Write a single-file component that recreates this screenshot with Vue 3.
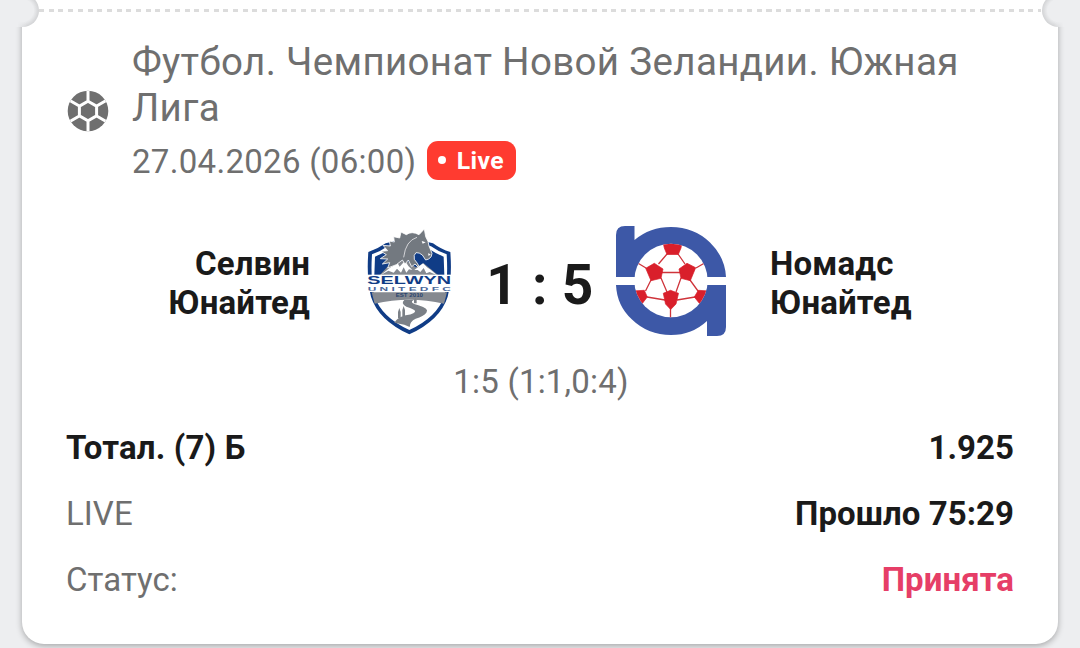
<template>
  <div class="page">
    <div class="ticket">
      <div class="tear">
        <span class="notch notch-left"></span>
        <span class="notch notch-right"></span>
      </div>

      <div class="event">
        <svg class="sport-icon" viewBox="0 0 42 42">
          <defs>
            <clipPath id="ball"><circle cx="21" cy="21" r="20.3" /></clipPath>
          </defs>
          <g clip-path="url(#ball)">
            <rect width="42" height="42" fill="#6f6f6f" />
            <path
              d="M21 11.200 29.600 16.200V25.800L21 30.800 12.400 25.800V16.200ZM21 11V0M29.700 16 40 10M29.700 26 40 32M21 31V42M12.300 26 2 32M12.300 16 2 10"
              fill="none" stroke="#fff" stroke-width="3"
            />
          </g>
        </svg>
        <div class="event-info">
          <div class="league">{{ bet.league }}</div>
          <div class="date-row">
            <span class="date">{{ bet.date }}</span>
            <span class="live"><i class="live-dot"></i>Live</span>
          </div>
        </div>
      </div>

      <div class="match">
        <div class="team home">{{ bet.home }}</div>
        <svg class="logo-home" viewBox="0 0 330 375">
          <!-- shield -->
          <path d="M40 96Q66 88 92 70Q130 62 163 42Q196 62 234 70Q258 88 286 96Q292 175 278 230Q256 300 163 343Q70 300 48 230Q34 175 40 96Z" fill="#103c86" />
          <path d="M51 103Q76 95 98 79Q134 70 163 54Q192 70 228 79Q250 95 275 103Q280 180 268 228Q246 292 163 330Q80 292 58 228Q46 180 51 103Z" fill="#fff" />
          <path d="M60 110Q84 100 104 87Q136 78 163 64Q190 78 222 87Q242 100 266 110L268 166H58Z" fill="#103c86" />
          <!-- mountains -->
          <path d="M74 166 96 142 150 118 182 142 206 130 250 166Z" fill="#858990" />
          <path d="M76 166 104 144 128 130 134 140 150 122 160 138 172 150 162 148 154 158 146 142 138 158 126 146 116 158 100 152ZM178 150 204 130 216 142 228 150 246 166 224 156 214 160 206 144 196 156 188 150Z" fill="#fff" />
          <!-- horse -->
          <path
            d="M208 27 212 50Q221 64 222 78L231 100Q231 112 221 117L212 120 202 105Q193 97 183 98Q175 104 178 118Q190 130 194 146L180 132 170 140 160 120 150 132 142 120 124 134 98 144 104 128 82 132 98 117 76 116 94 104 78 94 98 92 84 76 106 78 103 63 118 66 116 50 134 54 138 36 154 44Q170 32 192 44Z"
            fill="#737980" stroke="#fff" stroke-width="2.500"
          />
          <path d="M186 52Q152 62 146 112" fill="none" stroke="#e4e5e7" stroke-width="2.500" />
          <path d="M200 63 212 67 203 71ZM219 100 227 103 221 108Z" fill="#fff" />
          <!-- name band -->
          <rect x="34" y="164" width="258" height="52" fill="#fff" />
          <text x="37" y="192" textLength="251" lengthAdjust="spacingAndGlyphs" class="crest-name">SELWYN</text>
          <text x="38" y="212" textLength="250" lengthAdjust="spacingAndGlyphs" class="crest-sub">U N I T E D  F C</text>
          <path d="M50 217H276L267 251Q163 228 59 251Z" fill="#858990" />
          <text x="122" y="232" textLength="82" lengthAdjust="spacingAndGlyphs" class="crest-year">EST 2010</text>
          <path
            d="M148 240H176Q160 248 190 256Q224 266 214 278Q206 288 182 296Q164 304 164 321L148 314 118 308Q128 292 152 286Q184 280 180 272Q174 266 154 260Q136 250 148 240Z"
            fill="#7b8087"
          />
          <path d="M142 290V270L146 258 150 270V290ZM129 294V276L133 264 137 276V294ZM177 250V240L181 234 185 240V250Z" fill="#7b8087" />
        </svg>
        <div class="score">{{ bet.score }}</div>
        <svg class="logo-away" viewBox="0 0 110 110">
          <defs>
            <clipPath id="away-ball"><circle cx="55" cy="54.500" r="36.700" /></clipPath>
          </defs>
          <path d="M0 51V9Q0 0 9 0H18.500V14Q34 1 55 1Q78 1 94 16.500Q109 31 110 51Z" fill="#3d58a7" />
          <path d="M0 59H110V101Q110 110 101 110H91V95Q76 109 55 109Q32 109 16 93.500Q1 80 0 59Z" fill="#3d58a7" />
          <g clip-path="url(#away-ball)">
            <rect width="110" height="110" fill="#fff" />
            <path
              d="M51 28 42.500 38M62 28 69 38M46 46.500H64M30 42 20 36M80 42 92 35M35 54 29.500 65M45 52 51 66M65 52 60 66M74 54 82 65M31 71 49 74M61 74 79 71M54.500 80V93"
              fill="none" stroke="#cf343b" stroke-width="1.300"
            />
            <path
              d="M47 16H66L65 22 62.300 28.500H51L48.300 22ZM38.300 37.300 47 43 45 52.300 35 54.700 29.700 42.300ZM71 37.300 63 43 65 52.300 74.300 54.700 79.700 41.700ZM47.300 67.300 54.500 64.300 62.500 67.300 60 78 54.700 83.500 49.500 78ZM16 65 28.300 64.300 31.300 71 26.300 77.500 18 80ZM94 65 82.300 64.300 78.300 71 83.500 77.500 92 80Z"
              fill="#d91f2b" stroke="#d91f2b" stroke-width="0.700"
            />
          </g>
        </svg>
        <div class="team away">{{ bet.away }}</div>
      </div>

      <div class="periods">{{ bet.periods }}</div>

      <div class="rows">
        <div v-for="row in rows" :key="row.label" class="row">
          <span :class="{ strong: row.strong }">{{ row.label }}</span>
          <span class="value" :class="{ accepted: row.accepted }">{{ row.value }}</span>
        </div>
      </div>
    </div>
  </div>
</template>

<script setup>
const bet = {
  league: 'Футбол. Чемпионат Новой Зеландии. Южная Лига',
  date: '27.04.2026 (06:00)',
  home: 'Селвин Юнайтед',
  away: 'Номадс Юнайтед',
  score: '1 : 5',
  periods: '1:5 (1:1,0:4)',
};

const rows = [
  { label: 'Тотал. (7) Б', value: '1.925', strong: true },
  { label: 'LIVE', value: 'Прошло 75:29' },
  { label: 'Статус:', value: 'Принята', accepted: true },
];
</script>

<style>
body {
  margin: 0;
  background: #edeef0;
}
</style>

<style scoped>
.page {
  height: 648px;
  overflow: hidden;
  padding: 0 22px;
  box-sizing: border-box;
  background: #edeef0;
  font-family: Roboto, "Liberation Sans", sans-serif;
  font-size: 33px;
  color: #6f6f6f;
}

.ticket {
  position: relative;
  height: 643.5px;
  box-sizing: border-box;
  padding: 9px 44px 0;
  background: #fff;
  border-radius: 0 0 22px 22px;
  box-shadow: 0 2px 6px rgba(0, 0, 0, 0.3);
}

.tear {
  height: 3px;
  margin: 0 -27px;
  background: repeating-linear-gradient(90deg, #dcdcdc 0 5px, transparent 5px 9.7px);
}

.notch {
  position: absolute;
  top: -6px;
  width: 33px;
  height: 33px;
}

.notch-left {
  left: -16.5px;
  border-radius: 0 16.5px 16.5px 0;
  background:
    linear-gradient(90deg, #edeef0 35%, transparent 65%),
    radial-gradient(circle at center, #edeef0 11px, #d2d3d5 16.5px);
}

.notch-right {
  right: -16.5px;
  border-radius: 16.5px 0 0 16.5px;
  background:
    linear-gradient(270deg, #edeef0 35%, transparent 65%),
    radial-gradient(circle at center, #edeef0 11px, #d2d3d5 16.5px);
}

.event {
  display: flex;
  align-items: center;
  gap: 23px;
  padding-top: 27px;
}

.sport-icon {
  width: 42px;
  height: 42px;
  margin: 2px 0 0 1px;
  flex-shrink: 0;
}

.league {
  font-size: 38.5px;
  line-height: 46px;
  letter-spacing: 0.34px;
}

.date-row {
  display: flex;
  align-items: center;
  gap: 11px;
  margin-top: 10px;
  height: 39px;
}

.date {
  padding-top: 2px;
  letter-spacing: 0.3px;
  white-space: nowrap;
}

.live {
  display: flex;
  align-items: center;
  width: 89px;
  height: 39px;
  box-sizing: border-box;
  padding-left: 11px;
  border-radius: 11px;
  background: #ff3b30;
  color: #fff;
  font-size: 24.75px;
  font-weight: 700;
  letter-spacing: 0.4px;
}

.live-dot {
  flex-shrink: 0;
  width: 8px;
  height: 8px;
  margin: 0 10.5px 1px 0;
  border-radius: 50%;
  background: #fff;
}

.match {
  display: grid;
  grid-template-columns: 244px 45px 110px 25px 126px 110px 44px 1fr;
  align-items: center;
  height: 125px;
  margin-top: 40px;
}

.team {
  color: #1a1a1a;
  font-weight: 700;
  line-height: 39px;
  letter-spacing: 0.15px;
}

.home {
  grid-column: 1;
  text-align: right;
  padding-left: 80px;
}

.away {
  grid-column: 8;
  width: 170px;
}

.logo-home {
  grid-column: 3;
  width: 110px;
  height: 125px;
}

.logo-away {
  grid-column: 6;
  width: 110px;
  height: 110px;
  margin-bottom: 3px;
}

.score {
  grid-column: 4 / 6;
  padding: 4px 1px 0 0;
  color: #1a1a1a;
  font-size: 55px;
  font-weight: 700;
  letter-spacing: 0.3px;
  text-align: center;
  white-space: nowrap;
}

.crest-name {
  font: 700 31px "Liberation Sans", sans-serif;
  fill: #103c86;
}

.crest-sub {
  font: 700 16px "Liberation Sans", sans-serif;
  fill: #4a679b;
}

.crest-year {
  font: 700 15px "Liberation Sans", sans-serif;
  fill: #29446f;
}

.periods {
  margin-top: 17px;
  padding-left: 2px;
  line-height: 40px;
  text-align: center;
  letter-spacing: 0.2px;
}

.rows {
  margin-top: 12px;
}

.row {
  display: flex;
  justify-content: space-between;
  align-items: center;
  height: 66px;
  letter-spacing: 0.05px;
}

.strong,
.value {
  color: #1a1a1a;
  font-weight: 700;
}

.strong {
  letter-spacing: 0.17px;
}

.value.accepted {
  color: #e63e67;
}
</style>
